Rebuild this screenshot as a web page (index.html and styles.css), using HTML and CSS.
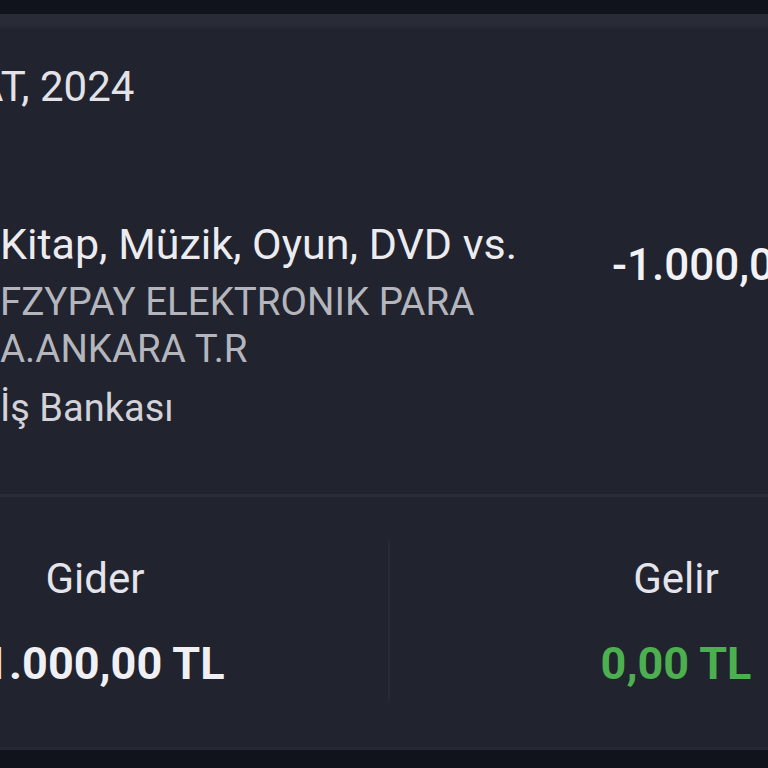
FILE: index.html
```html
<!DOCTYPE html>
<html>
<head>
    <title>İşlem Detayı</title>
    <link rel="stylesheet" href="styles.css">
</head>
<body>
    <div class="top-bar"></div>
    <div class="card">
        <div class="date-row">
            <span class="date">29 ŞUBAT, 2024</span>
        </div>

        <div class="transaction">
            <div class="details">
                <div class="category">Kitap, Müzik, Oyun, DVD vs.</div>
                <div class="merchant">FZYPAY ELEKTRONIK PARA<br>A.ANKARA T.R</div>
                <div class="bank">İş Bankası</div>
            </div>
            <div class="amount">-1.000,00 TL</div>
        </div>

        <div class="summary">
            <div class="summary-col">
                <div class="summary-label">Gider</div>
                <div class="summary-value">-1.000,00 TL</div>
            </div>
            <div class="summary-col">
                <div class="summary-label">Gelir</div>
                <div class="summary-value income">0,00 TL</div>
            </div>
        </div>
    </div>
</body>
</html>
```

FILE: styles.css
```css
body {
    font-family: Roboto, 'Noto Sans', sans-serif;
    background-color: #10121c;
    margin: 0;
    height: 768px;
    overflow: hidden;
}

.top-bar {
    height: 14px;
}

.card {
    width: 1160px;
    margin-left: -198px;
    background: linear-gradient(#292b37 0, #292b37 11px, #21232e 16px);
    border-bottom: 3px solid #262834;
    color: #e9e9ee;
}

.date-row {
    height: 126px;
    padding-left: 198px;
    overflow: hidden;
}

.date {
    display: inline-block;
    margin-top: 48px;
    margin-left: -160px;
    font-size: 42px;
    line-height: 50px;
    color: #e2e2e8;
}

.transaction {
    display: flex;
    justify-content: space-between;
    padding: 80px 0 62px 198px;
    border-bottom: 3px solid #2a2c38;
}

.category {
    font-size: 43px;
    line-height: 48px;
    color: #ececf0;
}

.merchant {
    margin-top: 10px;
    font-size: 38.5px;
    line-height: 47px;
    color: #b5b6bd;
}

.bank {
    margin-top: 12px;
    font-size: 38px;
    line-height: 48px;
    color: #d2d2d8;
}

.amount {
    width: 350px;
    margin-top: 20px;
    font-size: 44px;
    font-weight: 500;
    line-height: 50px;
    color: #f2f2f5;
}

.summary {
    display: grid;
    grid-template-columns: 586px 574px;
    padding: 44px 0 46px;
}

.summary-col {
    text-align: center;
    padding: 13px 0 12px;
}

.summary-col + .summary-col {
    border-left: 2px solid #282a35;
}

.summary-label {
    font-size: 42px;
    line-height: 50px;
    color: #e4e4ea;
}

.summary-value {
    margin-top: 35px;
    font-size: 45px;
    font-weight: 700;
    line-height: 50px;
    color: #f0f0f4;
}

.summary-value.income {
    color: #4caf50;
}
```
